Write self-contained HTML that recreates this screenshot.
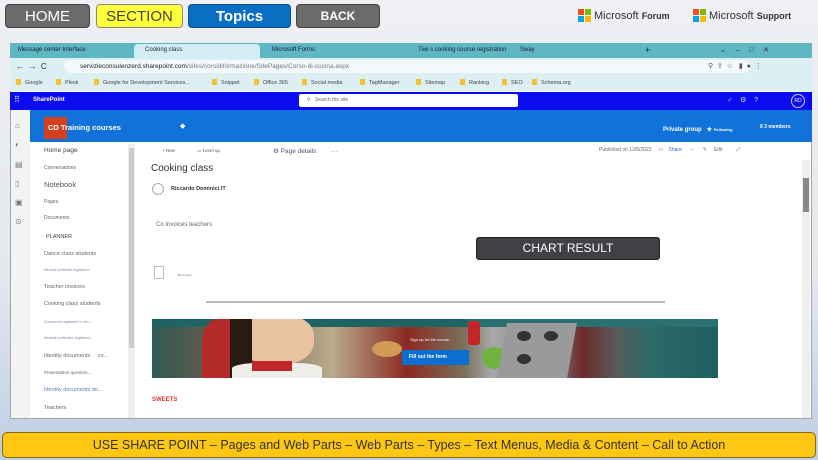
<!DOCTYPE html>
<html><head><meta charset="utf-8"><style>
*{box-sizing:border-box;margin:0;padding:0}
body{width:818px;height:460px;overflow:hidden;position:relative;font-family:"Liberation Sans",sans-serif;background:linear-gradient(#eef0f3 0%,#e4e7ec 60%,#bfcde3 100%)}
.a{position:absolute}
.btn{position:absolute;top:4px;height:24px;border-radius:4px;display:flex;align-items:center;justify-content:center;font-size:15px}
.t{position:absolute;font-size:6px;color:#555;white-space:nowrap}
.nav{position:absolute;left:44px;font-size:5.5px;color:#666;white-space:nowrap}
.bm{position:absolute;top:79px;font-size:5.5px;color:#444;white-space:nowrap}
.bm:before{content:"";display:inline-block;width:5px;height:6px;background:#f1c232;margin-right:4px;vertical-align:-1px}
.ms{position:absolute;top:9px;display:flex;align-items:center;font-size:11px;color:#333}
.logo{display:grid;grid-template-columns:6px 6px;gap:1px;margin-right:3px}
.logo i{width:6px;height:6px;display:block}
</style></head><body>
<div class="btn" style="left:5px;width:85px;background:#6b6b6b;color:#fff;border:1px solid #444">HOME</div>
<div class="btn" style="left:96px;width:87px;background:#ffff3a;color:#444;border:1px solid #888">SECTION</div>
<div class="btn" style="left:188px;width:103px;background:#0a6fc2;color:#fff;font-weight:bold;border:1px solid #0a4f90">Topics</div>
<div class="btn" style="left:296px;width:84px;background:#6b6b6b;color:#fff;font-size:12px;font-weight:bold;border:1px solid #444">BACK</div>
<div class="ms" style="left:578px"><span class="logo"><i style="background:#f25022"></i><i style="background:#7fba00"></i><i style="background:#00a4ef"></i><i style="background:#ffb900"></i></span>Microsoft&nbsp;<b style="font-size:9px">Forum</b></div>
<div class="ms" style="left:693px"><span class="logo"><i style="background:#f25022"></i><i style="background:#7fba00"></i><i style="background:#00a4ef"></i><i style="background:#ffb900"></i></span>Microsoft&nbsp;<b style="font-size:9px">Support</b></div>

<div class="a" style="left:10px;top:43px;width:802px;height:376px;background:#fff;border:1px solid #9aa"></div>
<div class="a" style="left:10px;top:43px;width:802px;height:15px;background:#5fb7c3"></div>
<div class="a" style="left:134px;top:44px;width:126px;height:14px;background:#d3eef2;border-radius:4px 4px 0 0"></div>
<div class="t" style="left:18px;top:47px;color:#123">Message center Interface</div>
<div class="t" style="left:145px;top:47px;color:#123">Cooking class</div>
<div class="t" style="left:272px;top:47px;color:#123">Microsoft Forms</div>
<div class="t" style="left:418px;top:47px;color:#123">Tiwi s cooking course registration</div>
<div class="t" style="left:520px;top:47px;color:#123">Sway</div>
<div class="t" style="left:645px;top:45px;font-size:9px;color:#123">+</div>
<div class="t" style="left:720px;top:46px;font-size:7px;color:#234">⌄ &nbsp;&nbsp;&nbsp;&nbsp;–&nbsp;&nbsp;&nbsp;&nbsp;&nbsp;□&nbsp;&nbsp;&nbsp;&nbsp;&nbsp;✕</div>
<div class="a" style="left:10px;top:58px;width:802px;height:17px;background:#dceff3"></div>
<div class="t" style="left:16px;top:62px;font-size:8px;color:#333">←&nbsp;&nbsp;→&nbsp;&nbsp;C</div>
<div class="a" style="left:64px;top:60px;width:686px;height:13px;background:#f3f9fa;border-radius:7px"></div>
<div class="t" style="left:80px;top:63px;font-size:6.5px;color:#222">servizieconsulenzerd.sharepoint.com<span style="color:#777">/sites/corsidiformazione/SitePages/Corso-di-cucina.aspx</span></div>
<div class="t" style="left:708px;top:62px;font-size:7px;color:#555">⚲&nbsp;&nbsp;⇪&nbsp;&nbsp;☆&nbsp;&nbsp;&nbsp;▮&nbsp;&nbsp;●&nbsp;&nbsp;⋮</div>
<div class="a" style="left:10px;top:75px;width:802px;height:16px;background:#dceff3"></div>
<div class="bm" style="left:16px">Google</div><div class="bm" style="left:56px">Plesk</div><div class="bm" style="left:94px">Google for Development Services...</div><div class="bm" style="left:212px">Snippet</div><div class="bm" style="left:254px">Office 365</div><div class="bm" style="left:302px">Social media</div><div class="bm" style="left:360px">TagManager</div><div class="bm" style="left:416px">Sitemap</div><div class="bm" style="left:460px">Ranking</div><div class="bm" style="left:502px">SEO</div><div class="bm" style="left:532px">Schema.org</div>
<div class="a" style="left:10px;top:92px;width:802px;height:18px;background:#0b0bef"></div>
<div class="t" style="left:14px;top:95px;color:#fff;font-size:8px">⠿</div>
<div class="t" style="left:33px;top:97px;color:#fff;font-weight:bold">SharePoint</div>
<div class="a" style="left:299px;top:94px;width:219px;height:13px;background:#fff;border-radius:2px"></div>
<div class="t" style="left:307px;top:97px;color:#666;font-size:5px">⚲ &nbsp;&nbsp;Search the site</div>
<div class="t" style="left:727px;top:96px;color:#dde;font-size:7px">♂&nbsp;&nbsp;&nbsp;&nbsp;⚙&nbsp;&nbsp;&nbsp;&nbsp;?</div>
<div class="a" style="left:791px;top:94px;width:14px;height:14px;border:1px solid #ccd;border-radius:50%;color:#fff;font-size:5px;text-align:center;line-height:12px">RD</div>
<div class="a" style="left:11px;top:110px;width:19px;height:308px;background:#f3f3f3"></div>
<div class="t" style="left:15px;top:116px;font-size:8px;color:#777;line-height:19.3px">⌂<br>◐<br>▤<br>▯<br>▣<br>⊙</div>
<div class="a" style="left:30px;top:110px;width:782px;height:32px;background:#1172d9"></div>
<div class="a" style="left:44px;top:117px;width:23px;height:22px;background:#d4401e"></div>
<div class="t" style="left:48px;top:123px;color:#fff;font-size:7.5px;font-weight:bold">CD Training courses</div>
<div class="t" style="left:180px;top:122px;color:#fff;font-size:7px">◆</div>
<div class="t" style="left:663px;top:126px;color:#fff;font-size:6px;font-weight:bold">Private group&nbsp;&nbsp;&nbsp;★ <span style="font-size:4px">Following</span></div>
<div class="t" style="left:760px;top:124px;color:#fff;font-size:5px;font-weight:bold">8 3 members</div>
<div class="nav" style="top:147px;font-size:6.5px;color:#444">Home page</div>
<div class="nav" style="top:165px;font-size:5px">Conversations</div>
<div class="nav" style="top:180px;font-size:7.5px;color:#555">Notebook</div>
<div class="nav" style="top:199px;font-size:5px">Pages</div>
<div class="nav" style="top:215px;font-size:5px">Documents</div>
<div class="nav" style="top:234px;left:46px;font-size:5.5px;color:#444">PLANNER</div>
<div class="nav" style="top:251px">Dance class students</div>
<div class="nav" style="top:268px;font-size:3.5px;color:#88a">Medical certificate registered...</div>
<div class="nav" style="top:284px">Teacher invoices</div>
<div class="nav" style="top:301px">Cooking class students</div>
<div class="nav" style="top:320px;font-size:3.5px;color:#88a">Documents registered in the c...</div>
<div class="nav" style="top:336px;font-size:3.5px;color:#88a">Medical certificates registered...</div>
<div class="nav" style="top:353px">Identity documents &nbsp;&nbsp;&nbsp;&nbsp;co...</div>
<div class="nav" style="top:370px;font-size:4.5px">Presentation question...</div>
<div class="nav" style="top:387px;color:#5a7ab0">Identity documents do...</div>
<div class="nav" style="top:405px">Teachers</div>
<div class="a" style="left:128px;top:144px;width:7px;height:274px;background:#eee"></div>
<div class="a" style="left:129px;top:148px;width:5px;height:200px;background:#ccc"></div>
<div class="t" style="left:162px;top:148px;font-size:4.5px;color:#555">+ New &nbsp;&nbsp;&nbsp;&nbsp;&nbsp;&nbsp;&nbsp;&nbsp;&nbsp;&nbsp;&nbsp;&nbsp;&nbsp;&nbsp;&nbsp;&nbsp;&nbsp;▭ Level up</div>
<div class="t" style="left:273px;top:147px;font-size:6.5px;color:#557">⚙ Page details &nbsp;&nbsp;&nbsp;&nbsp;&nbsp;&nbsp;&nbsp;···</div>
<div class="t" style="left:599px;top:147px;font-size:5px;color:#666">Published on 12/6/2023 &nbsp;&nbsp;&nbsp;&nbsp;⚇&nbsp;&nbsp;&nbsp;&nbsp;<span style="color:#36c">Share</span>&nbsp;&nbsp;&nbsp;&nbsp;&nbsp;&nbsp;–&nbsp;&nbsp;&nbsp;&nbsp;&nbsp;&nbsp;&nbsp;✎&nbsp;&nbsp;&nbsp;&nbsp;&nbsp;Edit&nbsp;&nbsp;&nbsp;&nbsp;&nbsp;&nbsp;&nbsp;&nbsp;&nbsp;&nbsp;⤢</div>
<div class="t" style="left:151px;top:163px;font-size:10px;color:#333">Cooking class</div>
<div class="a" style="left:152px;top:183px;width:12px;height:12px;border:1px solid #aaa;border-radius:50%"></div>
<div class="t" style="left:171px;top:186px;font-size:5.5px;color:#333;font-weight:bold">Riccardo Dominici IT</div>
<div class="t" style="left:156px;top:222px;font-size:6px;color:#666">Co Invoices teachers</div>
<div class="a" style="left:154px;top:266px;width:10px;height:13px;border:1px solid #bbb"></div>
<div class="t" style="left:178px;top:273px;font-size:3px;color:#777">Brochures</div>
<div class="a" style="left:206px;top:301px;width:459px;height:2px;background:#bbb"></div>
<div class="a" style="left:476px;top:237px;width:184px;height:23px;background:#3f4144;border:1px solid #222;border-radius:3px;color:#fff;font-size:12px;text-align:center;line-height:21px">CHART RESULT</div>
<!-- banner -->
<div class="a" style="left:152px;top:319px;width:566px;height:59px;background:#1f6364;overflow:hidden">
  <div class="a" style="left:0;top:8px;width:566px;height:51px;background:linear-gradient(90deg,#2f5a55 0%,#6a5a48 12%,#b9aa8c 32%,#8b2a22 45%,#7a6f5a 55%,#a7a7a7 60%,#8a8a8a 70%,#6b2a2a 76%,#5a5a5a 82%,#2a6a68 88%,#1f6060 100%)"></div>
  <div class="a" style="left:315px;top:0;width:250px;height:8px;background:#2a7070"></div>
  <div class="a" style="left:50px;top:0;width:40px;height:59px;background:#b52a2a;border-radius:40% 10px 0 0"></div>
  <div class="a" style="left:88px;top:-4px;width:74px;height:50px;background:#e9c3a0;border-radius:40% 40% 45% 45%"></div>
  <div class="a" style="left:78px;top:-6px;width:22px;height:66px;background:#2a1a14"></div>
  <div class="a" style="left:80px;top:44px;width:90px;height:18px;background:#eeeeea;border-radius:30% 30% 0 0"></div>
  <div class="a" style="left:100px;top:42px;width:40px;height:10px;background:#c2262c"></div>
  <div class="a" style="left:220px;top:22px;width:30px;height:16px;background:#d29a52;border-radius:50%"></div>
  <div class="a" style="left:316px;top:2px;width:12px;height:24px;background:#c4262a;border-radius:3px"></div>
  <div class="a" style="left:330px;top:28px;width:25px;height:22px;background:#6fb43f;border-radius:50%"></div>
  <div class="a" style="left:350px;top:4px;width:70px;height:55px;background:#9a9a9a;transform:skewX(-10deg)"></div>
  <div class="a" style="left:365px;top:12px;width:14px;height:10px;background:#333;border-radius:50%"></div>
  <div class="a" style="left:392px;top:12px;width:14px;height:10px;background:#333;border-radius:50%"></div>
  <div class="a" style="left:365px;top:35px;width:14px;height:10px;background:#333;border-radius:50%"></div>
</div>
<div class="t" style="left:410px;top:337px;font-size:4px;color:#fff">Sign up for the course</div>
<div class="a" style="left:402px;top:350px;width:67px;height:15px;background:#0a6fd0;color:#fff;font-size:5px;font-weight:bold;padding:4px 7px">Fill out the form</div>
<div class="t" style="left:152px;top:397px;font-size:6px;color:#d33;font-weight:bold">SWEETS</div>
<div class="a" style="left:802px;top:160px;width:8px;height:258px;background:#eee"></div>
<div class="a" style="left:803px;top:178px;width:6px;height:34px;background:#888"></div>
<div class="a" style="left:2px;top:432px;width:814px;height:26px;background:#fdc713;border:1px solid #8a6d00;border-radius:5px;font-size:12.5px;color:#333;text-align:center;line-height:24px">USE SHARE POINT – Pages and Web Parts – Web Parts – Types – Text Menus, Media &amp; Content – Call to Action</div>
</body></html>
